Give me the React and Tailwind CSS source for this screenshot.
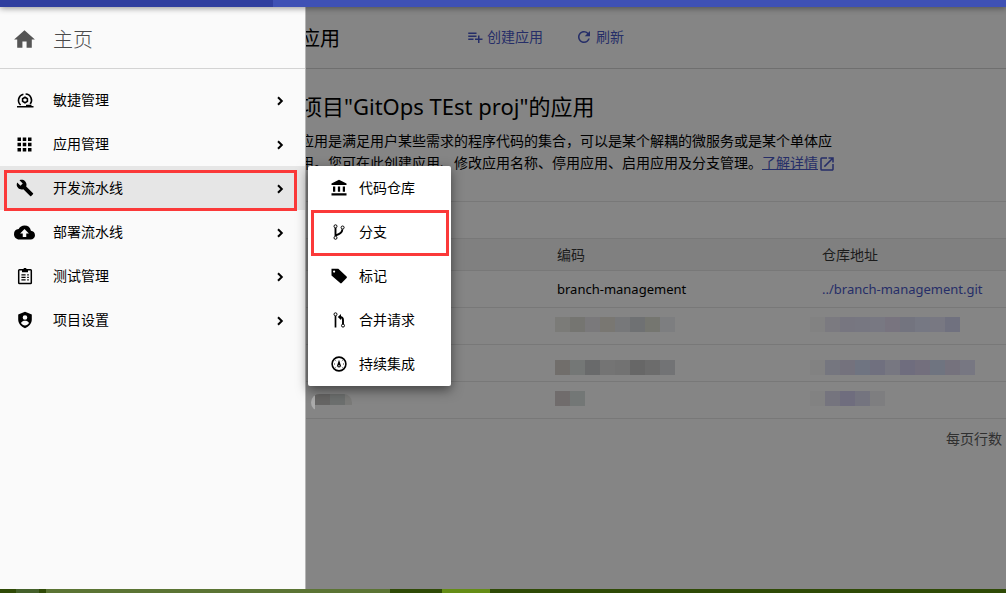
import React from "react";
import {
  MdHome, MdBuild, MdApps, MdCloudUpload, MdPlaylistAdd, MdRefresh, MdOpenInNew,
  MdAccountBalance,
} from "react-icons/md";

const FONT = "font-['Noto_Sans','Noto_Sans_CJK_SC',sans-serif]";

function AgileIcon({ className }) {
  return (
    <svg viewBox="0 0 18 18" className={className} fill="none" stroke="currentColor" strokeWidth="1.6" aria-hidden="true">
      <path d="M4.600 14A6.200 6.200 0 0 1 7.400 3.300M9.600 3a6.200 6.200 0 0 1 4.600 10" />
      <path d="M9 6.300l2.400 1.400v2.700L9 11.800l-2.400-1.400V7.700z" strokeWidth="1.600" />
      <path d="M1 15.800h16.500M10 14.600h5.500" />
    </svg>
  );
}

function ClipboardIcon({ className }) {
  return (
    <svg viewBox="0 0 18 18" className={className} fill="none" stroke="currentColor" strokeWidth="1.5" aria-hidden="true">
      <rect x="2.700" y="2.800" width="12.600" height="13.800" rx="0.800" />
      <path d="M6 4h6M9 1v2" strokeWidth="2.600" />
      <path d="M5.400 7.800h4.200M5.400 10.300h4.200M5.400 12.900h4.200M11.200 7.800h1.600M11.200 10.300h1.600M11.200 12.900h1.600" strokeWidth="1.200" />
    </svg>
  );
}

function ShieldUserIcon({ className }) {
  return (
    <svg viewBox="0 0 18 18" className={className} fill="currentColor" aria-hidden="true">
      <path fillRule="evenodd" d="M9 .8 2.200 3.400v5.200c0 4 2.800 7 6.800 8.600 4-1.600 6.800-4.600 6.800-8.600V3.400zM9 4.200a2.300 2.300 0 1 1 0 4.600 2.300 2.300 0 0 1 0-4.600zM5 12c.6-1.600 2.600-2.200 4-2.200s3.400.6 4 2.200c-.9 1.400-2.300 2.400-4 2.400S5.900 13.400 5 12z" />
    </svg>
  );
}

function BranchIcon({ className }) {
  return (
    <svg viewBox="0 0 18 18" className={className} fill="none" stroke="currentColor" aria-hidden="true">
      <circle cx="5.500" cy="3.300" r="1.500" />
      <circle cx="12.600" cy="4.500" r="1.500" />
      <circle cx="5.500" cy="14.800" r="1.500" />
      <path d="M5.500 5v8M12.400 6.200c-.2 3.600-2.600 4.600-6.600 6.200" strokeWidth="1.900" />
    </svg>
  );
}

function MergeIcon({ className }) {
  return (
    <svg viewBox="0 0 18 18" className={className} fill="none" stroke="currentColor" aria-hidden="true">
      <circle cx="5.500" cy="3.300" r="1.500" />
      <circle cx="13" cy="14.600" r="1.500" />
      <path d="M5.500 5v11.500" strokeWidth="1.700" />
      <path d="M13 13V9c0-2-1.200-3-3.400-3" strokeWidth="1.900" />
      <path d="M11 3v6L7.800 6z" fill="currentColor" stroke="none" />
    </svg>
  );
}

function TagIcon({ className }) {
  return (
    <svg viewBox="0 0 18 18" className={className} fill="currentColor" aria-hidden="true">
      <path fillRule="evenodd" d="M1.500 1.800h6.800L16.600 9.600c.5.500.5 1 0 1.500l-4.900 5c-.5.500-1 .5-1.500 0L1.500 8.500zM4.100 3.500a1.100 1.100 0 1 0 0 2.200 1.100 1.100 0 0 0 0-2.200z" />
    </svg>
  );
}

function GaugeIcon({ className }) {
  return (
    <svg viewBox="0 0 18 18" className={className} fill="none" stroke="currentColor" aria-hidden="true">
      <circle cx="9" cy="9" r="6.900" strokeWidth="1.600" />
      <path d="M9 4.800 10.900 10.600a1.900 1.900 0 1 1-3.800 0z" fill="currentColor" stroke="none" />
      <circle cx="9" cy="10.800" r="0.700" fill="#fff" stroke="none" />
      <path d="M4 9h1M13 9h1M5.500 5.500l.6.6M12.500 5.500l-.6.6M5.500 12.500l.6-.6M12.500 12.500l-.6-.6" strokeWidth="0.800" />
    </svg>
  );
}

function Arrow() {
  return (
    <svg viewBox="0 0 10 12" className="h-3 w-[10px]" fill="none" stroke="currentColor" strokeWidth="2" aria-hidden="true">
      <path d="M3 3.200 6.800 7 3 10.800" />
    </svg>
  );
}

const menu = [
  { label: "敏捷管理", Icon: AgileIcon },
  { label: "应用管理", Icon: MdApps, big: true },
  { label: "开发流水线", Icon: MdBuild, active: true },
  { label: "部署流水线", Icon: MdCloudUpload, big: true },
  { label: "测试管理", Icon: ClipboardIcon },
  { label: "项目设置", Icon: ShieldUserIcon },
];

const submenu = [
  { label: "代码仓库", Icon: MdAccountBalance },
  { label: "分支", Icon: BranchIcon, marked: true },
  { label: "标记", Icon: TagIcon },
  { label: "合并请求", Icon: MergeIcon },
  { label: "持续集成", Icon: GaugeIcon },
];

const maskedRows = [
  {
    pad: "pt-[9px]",
    code: ["#7b7b78", "#757571", "#7a797b", "#797772", "#77787a", "#6f7173", "#757670", "#7d7e80"],
    url: ["#828282", "#7b7a80", "#777680", "#777781", "#787882", "#78747f", "#73747f", "#767883", "#787882", "#70717f"],
  },
  {
    pad: "pt-[15px]",
    code: ["#716e6b", "#747776", "#696a6b", "#747474", "#727272", "#676767", "#6c6c6c", "#727375"],
    url: ["#828282", "#75767f", "#74727d", "#6f7481", "#70707f", "#777781", "#6f6d7e", "#736f7d", "#6f7480", "#75727d", "#777782"],
  },
  {
    pad: "pt-[9px]",
    code: ["#706c6c", "#737776"],
    url: ["#828282", "#75747e", "#6f6d7e", "#74747f", "#7e7e80"],
  },
];

function Mask({ colors }) {
  return (
    <div className="flex h-[15px]" aria-hidden="true">
      {colors.map((c, i) => (
        <span key={i} className="w-[15px]" style={{ backgroundColor: c }} />
      ))}
    </div>
  );
}

function Drawer() {
  return (
    <aside className="relative z-10 w-[306px] shrink-0 border-r border-[#b5b5b5] bg-[#fafafa]">
      <a href="#home" className="flex h-[62px] items-center border-b border-[#d3d3d3] pt-1 pl-3 text-[20px] font-light text-[#4a4a4a]">
        <MdHome className="size-[25px] text-[#555]" aria-hidden="true" />
        <span className="pl-4">主页</span>
      </a>
      <nav className="pt-[9px]">
        {menu.map(({ label, Icon, big, active }) => (
          <div key={label} className="relative">
            <button
              type="button"
              className={"flex h-11 w-full items-center pr-5 pl-[14px] text-left text-[14px] text-black " + (active ? "bg-[#e6e6e6]" : "")}
            >
              <span className="flex w-[39px] items-center">
                <span className="flex w-[21px] justify-center">
                  <Icon className={big ? "size-[21px] shrink-0" : "size-[18px] shrink-0"} aria-hidden="true" />
                </span>
              </span>
              <span className="flex-1 pb-0.5">{label}</span>
              <Arrow />
            </button>
            {active && (
              <>
                <div className="pointer-events-none absolute top-1 right-2 left-1 h-[41px] border-3 border-[#fb3939]" />
                <ul className="absolute top-0 left-[308px] w-[143px] rounded-[2px] bg-white shadow-[0_4px_12px_rgba(0,0,0,0.5)]">
                  {submenu.map(({ label: sub, Icon: SubIcon, marked }) => (
                    <li key={sub} className="relative">
                      <a href="#sub" className="flex h-11 items-center gap-[11px] pl-[22px] text-[14px] text-black">
                        <SubIcon className="size-[18px]" aria-hidden="true" />
                        <span className="pb-0.5">{sub}</span>
                      </a>
                      {marked && (
                        <div className="pointer-events-none absolute top-0 right-[2px] left-[3px] h-[46px] border-3 border-[#fb3939]" />
                      )}
                    </li>
                  ))}
                </ul>
              </>
            )}
          </div>
        ))}
      </nav>
    </aside>
  );
}

function Content() {
  return (
    <main className="-ml-[6px] min-w-0 flex-1 bg-[#858585] text-[14px] text-black">
      <header className="flex h-[62px] items-center border-b border-[#6f6f6f] text-[#262e68]">
        <h1 className="w-[166px] pt-0.5 text-[20px] text-black">应用</h1>
        <div className="flex gap-8 pb-0.5">
          <button type="button" className="flex items-center gap-[3px]">
            <MdPlaylistAdd className="size-[18px]" aria-hidden="true" />创建应用
          </button>
          <button type="button" className="flex items-center gap-[3px]">
            <MdRefresh className="size-[18px]" aria-hidden="true" />刷新
          </button>
        </div>
      </header>
      <section className="border-b border-[#787878] pt-[21px] pb-[27px]">
        <h2 className="text-[22px] leading-8">项目"GitOps TEst proj"的应用</h2>
        <p className="mt-2 max-w-[545px] leading-[22px]">
          应用是满足用户某些需求的程序代码的集合，可以是某个解耦的微服务或是某个单体应用。您可在此创建应用、修改应用名称、停用应用、启用应用及分支管理。
          <a href="#more" className="text-[#262e68] underline">
            了解详情
            <MdOpenInNew className="inline size-[18px]" aria-hidden="true" />
          </a>
        </p>
      </section>
      <table className="mt-9 w-full table-fixed border-collapse text-left">
        <colgroup>
          <col className="w-[257px]" />
          <col className="w-[265px]" />
          <col />
        </colgroup>
        <thead>
          <tr className="h-8 border-y border-[#787878] bg-[#808080] text-[#1c1c1c]">
            <th aria-label="名称" />
            <th className="font-normal">编码</th>
            <th className="font-normal">仓库地址</th>
          </tr>
        </thead>
        <tbody>
          <tr className="h-[37px] border-b border-[#787878] text-[13px]">
            <td />
            <td className="pt-0.5">branch-management</td>
            <td className="pt-0.5"><a href="#repo" className="text-[#262e68]">../branch-management.git</a></td>
          </tr>
          {maskedRows.map(({ pad, code, url }, i) => (
            <tr key={i} className="h-[37px] border-b border-[#787878] align-top">
              <td className="pt-3">
                {i === 2 && (
                  <div className="ml-[11px] flex h-[17px] w-[41px] overflow-hidden rounded-l-full rounded-tr-full" aria-hidden="true">
                    <span className="w-1 bg-[#ababab]" />
                    <span className="h-[11px] w-[15px] bg-[#666564]" />
                    <span className="h-[11px] w-[15px] bg-[#6c6f6e]" />
                    <span className="h-[11px] flex-1 bg-[#7a7a78]" />
                  </div>
                )}
              </td>
              <td className={pad}><div className="-ml-0.5"><Mask colors={code} /></div></td>
              <td className={pad}><div className="-ml-3"><Mask colors={url} /></div></td>
            </tr>
          ))}
        </tbody>
      </table>
      <p className="pt-[9px] pr-1 text-right text-[#303030]">每页行数</p>
    </main>
  );
}

export default function App() {
  return (
    <div className={"flex min-h-screen flex-col overflow-hidden " + FONT}>
      <div className="relative z-20 flex h-[7px] bg-[#3f51b5] shadow-[0_1px_6px_rgba(0,0,0,0.45)]">
        <div className="w-[273px] bg-[#303f9f]" />
      </div>
      <div className="flex flex-1">
        <Drawer />
        <Content />
      </div>
      <footer className="relative z-20 flex h-1 bg-[#2f4a06]">
        <div className="ml-4 w-[23px] bg-[#44602a]" />
        <div className="ml-[7px] w-[344px] bg-[#5b7434]" />
        <div className="ml-[52px] w-12 bg-[#658d15]" />
      </footer>
    </div>
  );
}
